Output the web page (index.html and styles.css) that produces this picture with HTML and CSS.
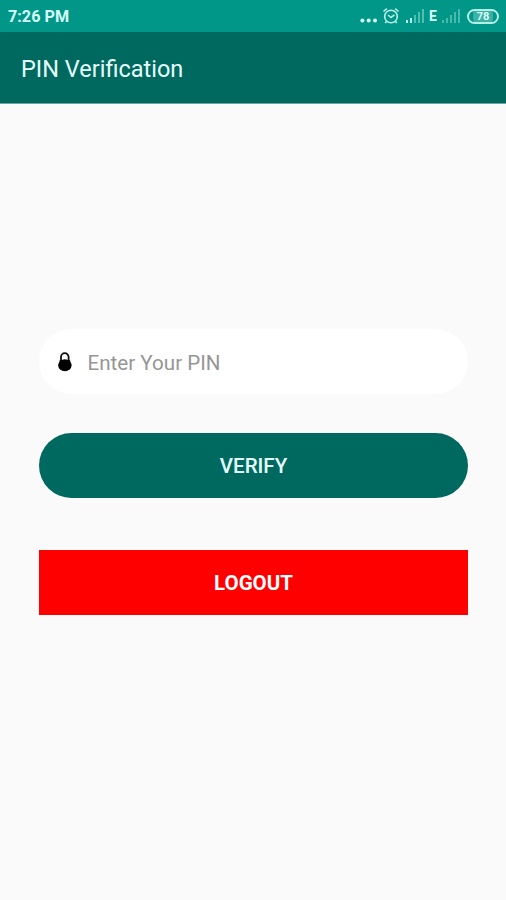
FILE: index.html
```html
<!DOCTYPE html>
<html lang="en">
<head>
<meta charset="utf-8">
<title>PIN Verification</title>
<link rel="stylesheet" href="styles.css">
</head>
<body>
<div class="status">
  <span class="time">7:26 PM</span>
  <div class="indicators">
    <svg class="dots" width="18" height="32" viewBox="0 0 18 32"><circle cx="2.4" cy="20.5" r="2"/><circle cx="8.7" cy="20.5" r="2"/><circle cx="15" cy="20.5" r="2"/></svg>
    <svg class="alarm" width="18" height="18" viewBox="0 0 18 18"><circle cx="9" cy="9.5" r="6.3"/><path d="M1.5 4.5 4.8 1.7M16.5 4.5 13.2 1.7M4.6 14.3 3.2 16M13.4 14.3 14.8 16M6 8l3 2.5 3.5-2.7"/></svg>
    <svg class="signal" width="20" height="16" viewBox="0 0 20 16"><path d="M2 12v3M6 10v5"/><path class="dim" d="M10 7v8M14 4v11M18 1v14"/></svg>
    <span class="network">E</span>
    <svg class="signal faint" width="20" height="16" viewBox="0 0 20 16"><path d="M2 12v3M6 10v5M10 7v8M14 4v11M18 1v14"/></svg>
    <span class="battery">78</span>
  </div>
</div>
<header class="toolbar"><h1>PIN Verification</h1></header>
<main>
  <label class="field">
    <svg width="16" height="22" viewBox="0 0 16 22"><path class="shackle" d="M4 11V6a3.8 3.8 0 0 1 7.6 0V11"/><path d="M2.6 9.2h10.6v3h-10.6z"/><ellipse cx="7.9" cy="14.2" rx="6.7" ry="6"/></svg>
    <input type="text" placeholder="Enter Your PIN">
  </label>
  <button class="verify">VERIFY</button>
  <button class="logout">LOGOUT</button>
</main>
</body>
</html>
```
FILE: styles.css
```css
* { box-sizing: border-box; }
body { margin: 0; height: 900px; background: #fafafa; font-family: Roboto, sans-serif; overflow: hidden; }
.status { height: 32px; background: #009688; display: flex; justify-content: space-between; align-items: center; padding: 0 7px 0 8px; color: #d5fff8; }
.time { font-size: 16.2px; font-weight: 700; line-height: 30px; padding-top: 2px; }
.indicators { display: flex; align-items: center; height: 32px; }
.dots { fill: #d5fff8; margin-right: 4px; }
.alarm { fill: none; stroke: #b8eee6; stroke-width: 1.6; margin-right: 5px; }
.signal { stroke: #b5eee5; stroke-width: 2; fill: none; }
.signal .dim { opacity: .45; }
.faint { opacity: .4; }
.network { width: 16px; font-size: 14px; line-height: 32px; font-weight: 700; text-align: center; }
.battery { width: 32px; height: 15px; margin-left: 6px; border: 2px solid #b5eee5; border-radius: 8px; background: #3eb0a5; background-clip: content-box; padding: 0 4px; font-size: 11px; line-height: 11px; font-weight: 700; text-align: center; }
.toolbar { height: 72px; padding: 0 21px; background: #00695f; border-bottom: 1px solid #6aa49e; display: flex; align-items: center; }
h1 { margin: 0; color: #e4fffb; font-size: 23.5px; line-height: 32px; font-weight: 400; padding-top: 2px; }
main { padding: 225px 38px 0 39px; display: flex; flex-direction: column; }
.field { height: 65px; border-radius: 33px; background: #fff; display: flex; align-items: center; padding-left: 18px; }
.field svg { margin-right: 14.5px; }
.shackle { fill: none; stroke: #111; stroke-width: 1.8; }
input { border: 0; outline: 0; background: none; padding: 2px 0 0; width: 300px; font: 400 20.6px/28px Roboto, sans-serif; }
input::placeholder { color: #969696; opacity: 1; }
button { height: 64.5px; border: 0; padding: 2px 0 0; color: #fff; font-family: Roboto, sans-serif; font-size: 20.5px; }
.verify { margin-top: 39px; border-radius: 33px; background: #00695f; color: #e4fffb; font-weight: 500; }
.logout { margin-top: 52.5px; background: #f00; font-weight: 700; }
```
